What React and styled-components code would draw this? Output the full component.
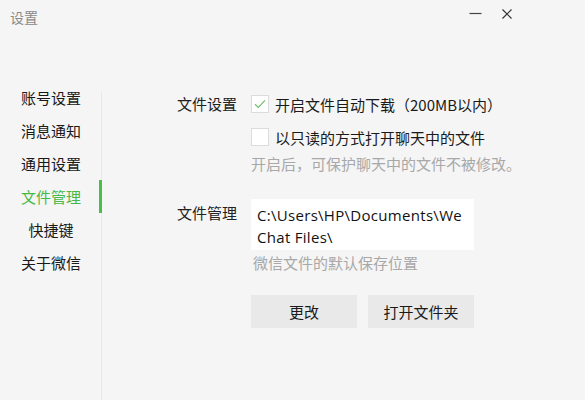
import React from "react";
import styled, { createGlobalStyle } from "styled-components";

const GlobalStyle = createGlobalStyle`
  html, body {
    margin: 0;
    padding: 0;
    background: #f5f5f5;
  }
  body {
    font-family: "Noto Sans CJK SC", "Microsoft YaHei", sans-serif;
  }
`

const Window = styled.div`
  width: 585px;
  height: 400px;
  display: flex;
  flex-direction: column;
  background: #f5f5f5;
  overflow: hidden;
`

const TitleBar = styled.div`
  height: 81px;
  display: flex;
  align-items: flex-start;
  padding: 7px 0 0 10px;
  box-sizing: border-box;
`

const Title = styled.div`
  font-size: 14px;
  line-height: 20px;
  color: #8a8a8a;
`

const Controls = styled.div`
  margin-left: auto;
  margin-right: 71px;
  display: flex;
  align-items: center;
  gap: 18px;
  height: 14px;
`

const ControlButton = styled.div`
  width: 14px;
  height: 14px;
  display: flex;
  align-items: center;
  justify-content: center;
`

const Body = styled.div`
  flex: 1;
  display: flex;
`

const Sidebar = styled.div`
  width: 102px;
  position: relative;
  &::before {
    content: "";
    position: absolute;
    right: 0;
    top: 11px;
    bottom: 0;
    width: 1px;
    background: #e8e8e8;
  }
`

const NavItem = styled.div`
  height: 33px;
  display: flex;
  align-items: center;
  justify-content: center;
  font-size: 15px;
  color: ${props => props.active ? "#46b946" : "#1a1a1a"};
  position: relative;
  ${props => props.active ? `
    &::after {
      content: "";
      position: absolute;
      right: 0;
      top: 0;
      bottom: 0;
      width: 3px;
      background: #46c046;
    }
  ` : ``}
`

const Content = styled.div`
  flex: 1;
  padding: 11px 0 0 75px;
  display: flex;
  flex-direction: column;
`

const Section = styled.div`
  display: grid;
  grid-template-columns: 74px 1fr;
  margin-bottom: ${props => props.gap || 0}px;
`

const Label = styled.div`
  font-size: 15px;
  line-height: 24px;
  color: #222;
  padding-top: ${props => props.offset || 0}px;
`

const Options = styled.div`
  display: flex;
  flex-direction: column;
`

const CheckRow = styled.label`
  display: flex;
  align-items: center;
  height: 24px;
  margin-bottom: 9px;
  font-size: 15px;
  color: #1a1a1a;
`

const Box = styled.span`
  width: 18px;
  height: 18px;
  box-sizing: border-box;
  border: 1px solid #dcdcdc;
  background: #fff;
  margin-right: 6px;
  display: flex;
  align-items: center;
  justify-content: center;
`

const Hint = styled.div`
  font-size: 15px;
  line-height: 20px;
  color: #a8a8a8;
  margin-top: ${props => props.top || 0}px;
  padding-left: ${props => props.indent || 0}px;
`

const PathBox = styled.div`
  width: 223px;
  height: 51px;
  box-sizing: border-box;
  background: #fff;
  padding: 5px 6px;
  font-size: 15px;
  line-height: 22px;
  letter-spacing: 0.3px;
  color: #111;
  font-family: "Open Sans", "Noto Sans CJK SC", sans-serif;
  word-break: break-all;
`

const ButtonRow = styled.div`
  display: flex;
  gap: 11px;
  margin-top: 22px;
`

const Button = styled.button`
  width: 106px;
  height: 33px;
  border: none;
  background: #e9e9e9;
  font-family: inherit;
  font-size: 15px;
  color: #1a1a1a;
  padding: 0;
`

const CheckMark = () => (
  <svg width="12" height="10" viewBox="0 0 12 10">
    <path d="M1 5.2 L4.3 8.4 L11 1.4" fill="none" stroke="#6cc46c" strokeWidth="1.2" />
  </svg>
)

const navItems = ["账号设置", "消息通知", "通用设置", "文件管理", "快捷键", "关于微信"]

function App () {
  return (
    <Window>
      <GlobalStyle />
      <TitleBar>
        <Title>设置</Title>
        <Controls>
          <ControlButton>
            <svg width="13" height="14" viewBox="0 0 13 14">
              <path d="M0.5 6.5 H12.5" stroke="#444" strokeWidth="1.2" />
            </svg>
          </ControlButton>
          <ControlButton>
            <svg width="12" height="14" viewBox="0 0 12 14">
              <path d="M1.5 2.5 L10.5 11.5 M10.5 2.5 L1.5 11.5" stroke="#333" strokeWidth="1.2" />
            </svg>
          </ControlButton>
        </Controls>
      </TitleBar>
      <Body>
        <Sidebar>
          {navItems.map((item) => (
            <NavItem key={item} active={item === "文件管理"}>{item}</NavItem>
          ))}
        </Sidebar>
        <Content>
          <Section gap={25}>
            <Label>文件设置</Label>
            <Options>
              <CheckRow>
                <Box><CheckMark /></Box>
                开启文件自动下载（200MB以内）
              </CheckRow>
              <CheckRow>
                <Box />
                以只读的方式打开聊天中的文件
              </CheckRow>
              <Hint top={-4}>开启后，可保护聊天中的文件不被修改。</Hint>
            </Options>
          </Section>
          <Section>
            <Label offset={2}>文件管理</Label>
            <Options>
              <PathBox>C:\Users\HP\Documents\WeChat Files\</PathBox>
              <Hint top={3} indent={2}>微信文件的默认保存位置</Hint>
              <ButtonRow>
                <Button>更改</Button>
                <Button>打开文件夹</Button>
              </ButtonRow>
            </Options>
          </Section>
        </Content>
      </Body>
    </Window>
  )
}

export default App;
